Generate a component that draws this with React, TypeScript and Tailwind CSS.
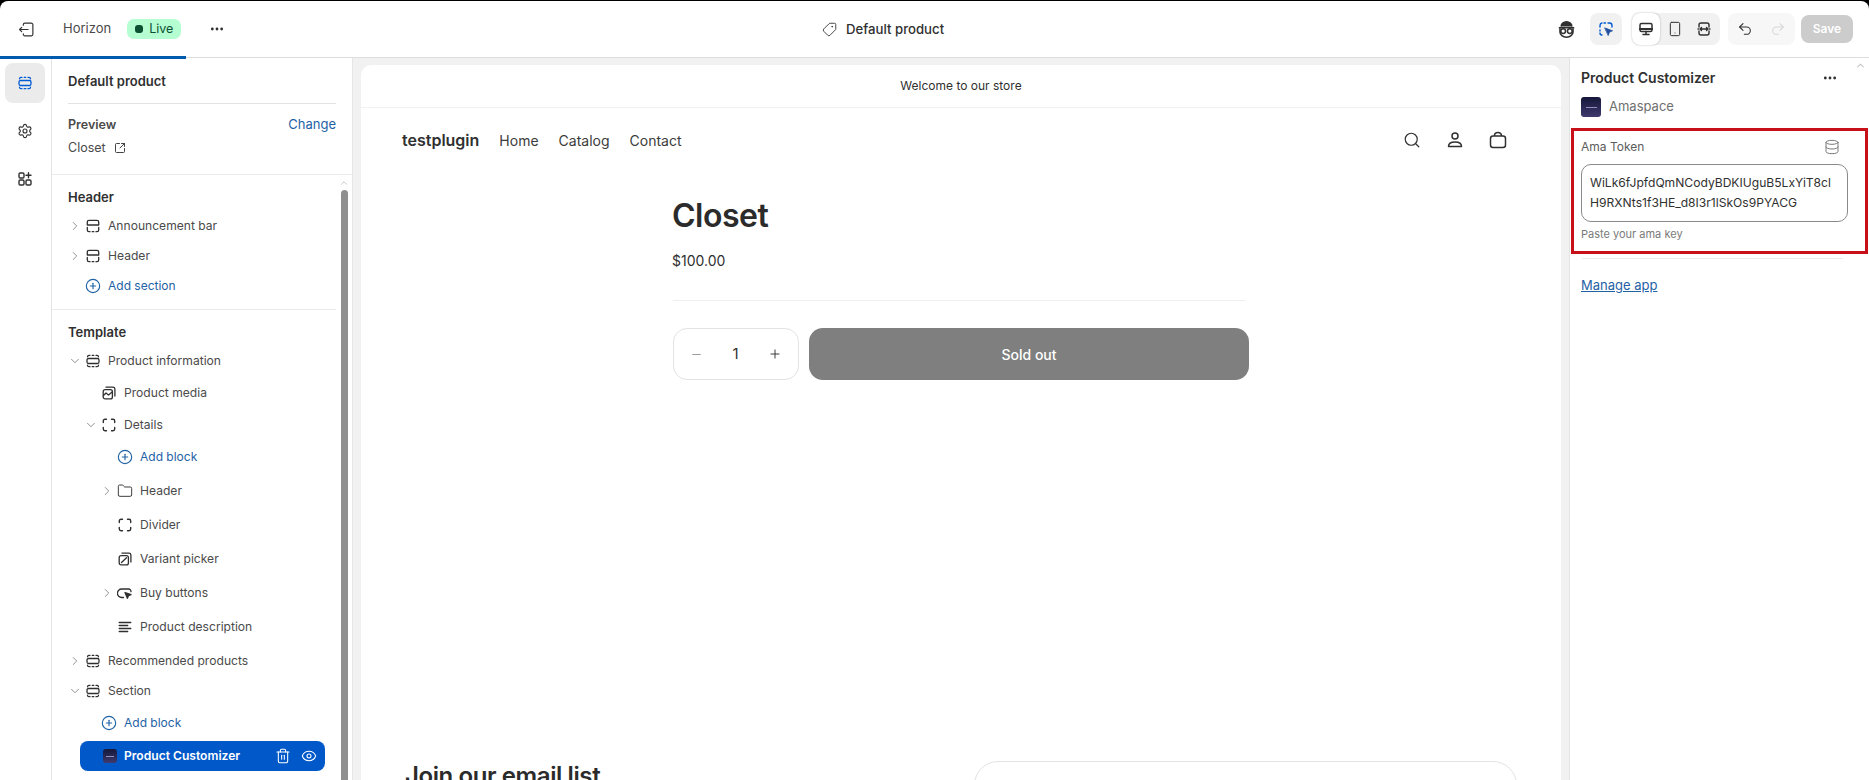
import React from "react";
import {
  ChevronRight, ChevronDown, ChevronUp, CirclePlus, Settings, SquareArrowOutUpRight, Ellipsis, Tag,
  Undo2, Redo2, Search, Trash2, Eye, Database, Smartphone, Minus, Plus, Folder,
} from "lucide-react";

const S = (p: React.SVGProps<SVGSVGElement>) => (
  <svg viewBox="0 0 16 16" width={16} height={16} fill="none" stroke="currentColor" strokeWidth={1.3} strokeLinecap="round" strokeLinejoin="round" {...p} />
);
const SectionIcon = ({ className = "" }: { className?: string }) => (
  <S className={className}>
    <rect x="2" y="5.500" width="12" height="5" rx="1.500" />
    <path d="M2.500 3.800A1.600 1.600 0 0 1 4 2.300h1M7.200 2.300h1.600M11 2.300h1a1.600 1.600 0 0 1 1.500 1.500" />
    <path d="M2.500 12.200A1.600 1.600 0 0 0 4 13.700h1M7.200 13.700h1.600M11 13.700h1a1.600 1.600 0 0 0 1.500-1.500" />
  </S>
);
const TopSection = () => (
  <S className="text-[#303030]">
    <path d="M2.300 7V4a1.700 1.700 0 0 1 1.700-1.700h8A1.700 1.700 0 0 1 13.700 4v3H2.300z" />
    <path d="M2.300 9.300v2.700A1.700 1.700 0 0 0 4 13.700h1M7.200 13.700h1.600M11 13.700h1a1.700 1.700 0 0 0 1.700-1.700V9.300" />
  </S>
);
const BlockDashed = () => (
  <S className="text-[#303030]" strokeWidth={1.4}>
    <path d="M5.500 2.300H4A1.700 1.700 0 0 0 2.300 4v1.500M10.500 2.300H12A1.700 1.700 0 0 1 13.700 4v1.500M5.500 13.700H4A1.700 1.700 0 0 1 2.300 12v-1.500M10.500 13.700H12a1.700 1.700 0 0 0 1.700-1.700v-1.500" />
  </S>
);
const MediaIcon = () => (
  <S className="text-[#303030]">
    <rect x="2.200" y="4.700" width="9.200" height="9.200" rx="2" />
    <path d="M5 2.200h7A1.900 1.900 0 0 1 13.900 4v7" />
    <path d="M2.400 10.500 5 8l2.500 2 3.700-3" />
  </S>
);
const VariantIcon = () => (
  <S className="text-[#303030]">
    <rect x="2.200" y="4.700" width="9.200" height="9.200" rx="2" />
    <path d="M5 2.200h7A1.900 1.900 0 0 1 13.900 4v7" />
    <path d="M4.500 11.500 9.500 6.800" />
  </S>
);
const BuyIcon = () => (
  <S className="text-[#303030]">
    <path d="M6.500 12.500H4.700a2.500 2.500 0 0 1 0-8.500h7a2.400 2.400 0 0 1 2.300 2.600" />
    <path d="m8 7.500 6 2.200-2.600 1-1 2.600z" fill="currentColor" />
  </S>
);
const DescIcon = () => (
  <S className="text-[#303030]">
    <path d="M2.200 3.500h11.600M2.200 6.500h8.500M2.200 9.500h11.600M2.200 12.500h8.500" />
  </S>
);
const AddRow = ({ label, pad, h }: { label: string; pad: string; h: string }) => (
  <div className={`flex items-center gap-[7px] ${pad} ${h} text-[12px]`}>
    <CirclePlus size={16} strokeWidth={1.7} className="text-[#1f62a5]" />
    <span className="text-[#1f62a5]">{label}</span>
  </div>
);
const Row = ({ h, pad, chev, icon, label }: { h: string; pad: string; chev?: "r" | "d"; icon: React.ReactNode; label: string }) => (
  <div className={`flex items-center ${h} ${pad} text-[12.1px] text-[#4a4a4a]`}>
    <span className="w-[16px] shrink-0 flex justify-start text-[#8a8a8a]">
      {chev === "r" && <ChevronRight size={14} strokeWidth={1.6} />}
      {chev === "d" && <ChevronDown size={14} strokeWidth={1.6} />}
    </span>
    <span className="w-[16px] shrink-0 ml-[1px] flex">{icon}</span>
    <span className="ml-[7px] whitespace-nowrap">{label}</span>
  </div>
);
const Logo = ({ size }: { size: string }) => (
  <span className={`${size} rounded-[3px] bg-gradient-to-b from-[#15173a] to-[#3f3a6e] flex items-center justify-center shrink-0`}>
    <span className="w-[55%] h-px bg-[#8f8fb8]" />
  </span>
);

const TopBar = () => (
  <div className="h-[56px] shrink-0 bg-white rounded-t-[8px] flex items-center relative">
    <div className="w-[52px] flex justify-center text-[#303030]">
      <svg viewBox="0 0 16 16" width={17} height={17} fill="none" stroke="currentColor" strokeWidth={1.100} strokeLinecap="round" strokeLinejoin="round">
        <path d="M5 4V3.500A1.500 1.500 0 0 1 6.500 2h6A1.500 1.500 0 0 1 14 3.500v9a1.500 1.500 0 0 1-1.500 1.500h-6A1.500 1.500 0 0 1 5 12.500V12" />
        <path d="M9.500 8H1.500M3.500 6 1.500 8l2 2" />
      </svg>
    </div>
    <span className="ml-[11px] text-[13px] text-[#4a4a4a]">Horizon</span>
    <span className="ml-[16px] h-[20px] w-[54px] rounded-[7px] bg-[#b4fed2] flex items-center pl-[8px] gap-[6px] text-[12.5px] text-[#0c5132]">
      <span className="w-[8px] h-[8px] rounded-[3px] bg-[#0c5132]" />
      Live
    </span>
    <Ellipsis size={16} strokeWidth={2.2} className="ml-[28px] text-[#303030]" />
    <div className="absolute left-[822px] top-[19px] flex items-center gap-[9px] text-[13.2px] font-medium text-[#303030]">
      <Tag size={15} strokeWidth={1.4} className="-scale-x-100" />
      Default product
    </div>
    <div className="ml-auto flex items-center pr-[16px]">
      <svg viewBox="0 0 16 16" width={19} height={19} fill="none" stroke="#303030" strokeWidth={1.300}>
        <path d="M3.500 5.500A4.500 4 0 0 1 12.500 5.500" fill="#303030" />
        <path d="M1.500 6.500h13" />
        <circle cx="5.200" cy="9.300" r="2" />
        <circle cx="10.800" cy="9.300" r="2" />
        <path d="M2.500 7v3a5.500 4.500 0 0 0 11 0V7" />
      </svg>
      <div className="ml-[14px] w-[32px] h-[32px] rounded-[8px] bg-[#f1f1f1] flex items-center justify-center">
        <svg viewBox="0 0 16 16" width={16} height={16} fill="none" stroke="#005bd3" strokeWidth={1.400} strokeLinecap="round">
          <path d="M6 2h1.500M2 6V4.500A2.500 2.500 0 0 1 4 2M2 9v1M10 2h1.500A2.500 2.500 0 0 1 14 4.500V6M4 14a2 2 0 0 1-2-2" />
          <path d="m7 7 7.500 2.800-3 1.200-1.200 3.200z" fill="#1f4f9e" stroke="#1f4f9e" strokeWidth={0.8} strokeLinejoin="round" />
        </svg>
      </div>
      <div className="ml-[10px] h-[32px] w-[88px] rounded-[8px] bg-[#f1f1f1] flex items-center text-[#303030]">
        <span className="w-[28px] h-[32px] rounded-[8px] bg-white flex items-center justify-center shadow-[0_0_2px_rgba(0,0,0,0.3)]">
          <svg viewBox="0 0 16 16" width={16} height={16} fill="none" stroke="currentColor" strokeWidth={1.500} strokeLinecap="round" strokeLinejoin="round">
            <rect x="2" y="2.500" width="12" height="8" rx="1.500" />
            <path d="M2 8h12" strokeWidth={2.200} />
            <path d="M8 10.500v3M5 13.500h6" />
          </svg>
        </span>
        <span className="w-[30px] flex justify-center"><Smartphone size={16} strokeWidth={1.5} /></span>
        <span className="w-[28px] flex justify-center">
          <svg viewBox="0 0 16 16" width={16} height={16} fill="none" stroke="currentColor" strokeWidth={1.400} strokeLinecap="round" strokeLinejoin="round">
            <path d="M3 6V4a2 2 0 0 1 2-2h6a2 2 0 0 1 2 2v2M3 10v2a2 2 0 0 0 2 2h6a2 2 0 0 0 2-2v-2" />
            <path d="M4 8h8M2 8h.5M13.500 8h.5M5.500 6.500 4 8l1.500 1.500M10.500 6.500 12 8l-1.500 1.500" />
          </svg>
        </span>
      </div>
      <div className="ml-[8px] h-[32px] w-[67px] rounded-[8px] bg-[#f7f7f7] flex items-center">
        <span className="w-[33px] flex justify-center"><Undo2 size={16} strokeWidth={1.6} className="text-[#303030]" /></span>
        <span className="w-[33px] flex justify-center"><Redo2 size={16} strokeWidth={1.6} className="text-[#d8d8d8]" /></span>
      </div>
      <div className="ml-[6px] w-[52px] h-[28px] rounded-[8px] bg-[#cccccc] text-white text-[12px] font-semibold flex items-center justify-center">Save</div>
    </div>
    <div className="absolute left-0 right-0 bottom-[-1px] h-[1px] bg-[#dddddd]" />
    <div className="absolute left-0 bottom-[-2px] w-[186px] h-[3px] bg-[#005bac]" />
  </div>
);

const Rail = () => (
  <div className="w-[52px] shrink-0 border-r border-[#e3e3e3] bg-white flex flex-col items-start pl-[5px] pt-[5px] text-[#303030]">
    <div className="w-[40px] h-[40px] rounded-[8px] bg-[#ebebeb] flex items-center justify-center text-[#005bd3]">
      <SectionIcon />
    </div>
    <div className="w-[40px] h-[40px] mt-[8px] flex items-center justify-center"><Settings size={16} strokeWidth={1.7} /></div>
    <div className="w-[40px] h-[40px] mt-[8px] flex items-center justify-center">
      <S strokeWidth={1.400}>
        <rect x="2" y="2" width="5" height="5" rx="1.200" />
        <rect x="2" y="9" width="5" height="5" rx="1.200" />
        <rect x="9" y="9" width="5" height="5" rx="1.200" />
        <path d="M11.500 1.800v5M9 4.300h5" />
      </S>
    </div>
  </div>
);

const Sidebar = () => (
  <div className="w-[301px] shrink-0 bg-white flex flex-col border-r border-[#e6e6e6] h-full">
    <div className="pl-[16px] pr-[16px]">
      <div className="h-[46px] flex items-center text-[13px] font-semibold text-[#303030] border-b border-[#e3e3e3] pt-[3px]">Default product</div>
    </div>
    <div className="h-[71px] pl-[16px] pr-[16px] border-b border-[#ebebeb] shrink-0">
      <div className="flex justify-between items-center mt-[11px] h-[20px] text-[13px]">
        <span className="font-semibold text-[#4a4a4a] text-[12.5px]">Preview</span>
        <span className="text-[#1f62a5]">Change</span>
      </div>
      <div className="flex items-center gap-[8px] mt-[4px] text-[12.5px] text-[#4a4a4a]">
        Closet <SquareArrowOutUpRight size={12} strokeWidth={1.8} className="text-[#303030]" />
      </div>
    </div>
    <div className="flex flex-1 min-h-0 overflow-hidden">
      <div className="w-[284px] shrink-0 pl-[16px]">
        <div className="mt-[9px] h-[28px] flex items-center text-[13px] font-semibold text-[#303030]">Header</div>
        <Row h="h-[28px]" pad="" chev="r" icon={<TopSection />} label="Announcement bar" />
        <Row h="h-[32px]" pad="" chev="r" icon={<TopSection />} label="Header" />
        <AddRow label="Add section" pad="pl-[17px]" h="h-[28px]" />
        <div className="border-b border-[#ebebeb] -ml-[16px] mt-[9px]" />
        <div className="mt-[7px] h-[32px] flex items-center text-[13px] font-semibold text-[#303030]">Template</div>
        <Row h="h-[24px]" pad="" chev="d" icon={<SectionIcon className="text-[#303030]" />} label="Product information" />
        <Row h="h-[40px]" pad="pl-[16px]" icon={<MediaIcon />} label="Product media" />
        <Row h="h-[24px]" pad="pl-[16px]" chev="d" icon={<BlockDashed />} label="Details" />
        <AddRow label="Add block" pad="pl-[49px]" h="h-[40px]" />
        <Row h="h-[28px]" pad="pl-[32px]" chev="r" icon={<Folder size={16} strokeWidth={1.4} className="text-[#303030]" />} label="Header" />
        <Row h="h-[40px]" pad="pl-[32px]" icon={<BlockDashed />} label="Divider" />
        <Row h="h-[28px]" pad="pl-[32px]" icon={<VariantIcon />} label="Variant picker" />
        <Row h="h-[40px]" pad="pl-[32px]" chev="r" icon={<BuyIcon />} label="Buy buttons" />
        <Row h="h-[28px]" pad="pl-[32px]" icon={<DescIcon />} label="Product description" />
        <Row h="h-[40px]" pad="" chev="r" icon={<SectionIcon className="text-[#303030]" />} label="Recommended products" />
        <Row h="h-[20px]" pad="" chev="d" icon={<SectionIcon className="text-[#303030]" />} label="Section" />
        <AddRow label="Add block" pad="pl-[33px] mt-[4px]" h="h-[36px]" />
        <div className="ml-[12px] w-[245px] h-[30px] rounded-[8px] bg-[#0058c9] flex items-center pl-[23px] pr-[8px] text-white text-[12.1px] font-semibold">
          <Logo size="w-[14px] h-[14px]" />
          <span className="ml-[7px]">Product Customizer</span>
          <Trash2 size={16} strokeWidth={1.6} className="ml-auto" />
          <Eye size={16} strokeWidth={1.6} className="ml-[10px]" />
        </div>
      </div>
      <div className="w-[15px] flex flex-col items-center text-[#c4c4c4] pl-[1px]">
        <ChevronUp size={10} strokeWidth={2.2} className="mt-[3px]" />
        <div className="w-[7px] flex-1 rounded-t-[4px] bg-[#8f8f8f] mt-[2px]" />
      </div>
    </div>
  </div>
);

const Preview = () => (
  <div className="flex-1 min-w-0 bg-[#f1f1f1] pt-[7px] pl-[8px] overflow-hidden">
    <div className="w-[1200px] h-[760px] bg-white rounded-t-[10px] overflow-hidden text-[#303030]">
      <div className="h-[43px] flex items-center justify-center text-[12px] border-b border-[#f1f1f1]">Welcome to our store</div>
      <div className="h-[64px] flex items-center pl-[41px] pr-[54px]">
        <span className="text-[16px] font-semibold mr-[20px]">testplugin</span>
        <span className="text-[14px] text-[#3c3c3c] mr-[20px]">Home</span>
        <span className="text-[14px] text-[#3c3c3c] mr-[20px]">Catalog</span>
        <span className="text-[14px] text-[#3c3c3c]">Contact</span>
        <div className="ml-auto flex items-center gap-[25px]">
          <Search size={18} strokeWidth={1.6} />
          <svg viewBox="0 0 18 18" width={18} height={18} fill="none" stroke="currentColor" strokeWidth={1.500}>
            <circle cx="9" cy="5" r="3" />
            <path d="M2.500 15.500c0-3 3-4.500 6.500-4.500s6.500 1.500 6.500 4.500z" strokeLinejoin="round" />
          </svg>
          <svg viewBox="0 0 18 18" width={18} height={18} fill="none" stroke="currentColor" strokeWidth={1.500} strokeLinejoin="round">
            <rect x="1.500" y="5" width="15" height="11.500" rx="2.500" />
            <path d="M5.500 5V4.500a3.500 3 0 0 1 7 0V5" />
          </svg>
        </div>
      </div>
      <div className="w-[576px] mx-auto">
        <h1 className="mt-[24px] -ml-[1px] h-[40px] flex items-center text-[32px] font-semibold tracking-[-0.5px] text-[#2b2b2b]">Closet</h1>
        <div className="mt-[15px] -ml-[1px] text-[14px] leading-[20px]">$100.00</div>
        <div className="mt-[29px] w-[573px] border-b border-[#efefef]" />
        <div className="mt-[27px] flex gap-[10px]">
          <div className="w-[126px] h-[52px] rounded-[14px] border border-[#e3e3e3] flex items-center justify-between px-[16px]">
            <Minus size={13} strokeWidth={1.6} className="text-[#8a8a8a]" />
            <span className="text-[15px]">1</span>
            <Plus size={14} strokeWidth={1.6} />
          </div>
          <div className="w-[440px] h-[52px] rounded-[14px] bg-[#7f7f7f] text-white text-[14px] font-medium flex items-center justify-center">Sold out</div>
        </div>
      </div>
      <div className="mt-[381px] flex items-start pl-[44px]">
        <div className="text-[24px] leading-[30px] font-semibold whitespace-nowrap w-[569px] tracking-[-0.4px] text-[#2b2b2b]">Join our email list</div>
        <div className="w-[543px] h-[60px] rounded-t-[24px] border border-[#e3e3e3]" />
      </div>
    </div>
  </div>
);

const RightPanel = () => (
  <div className="w-[300px] shrink-0 bg-white border-l border-[#e3e3e3] relative text-[#303030]">
    <ChevronUp size={11} strokeWidth={2.2} className="absolute right-[3px] top-[2px] text-[#c4c4c4]" />
    <div className="pl-[11px] pr-[31px] pt-[10px] h-[29px] flex items-center justify-between">
      <span className="text-[14px] font-semibold">Product Customizer</span>
      <Ellipsis size={16} strokeWidth={2.2} />
    </div>
    <div className="pl-[11px] mt-[10px] h-[20px] flex items-center gap-[8px] text-[13px] text-[#6f6f6f]">
      <Logo size="w-[20px] h-[20px]" />
      Amaspace
    </div>
    <div className="ml-[1px] mr-[1px] mt-[11px] h-[126px] border-[3px] border-[#c8101a] pl-[7px] pr-[16px]">
      <div className="h-[32px] flex items-center justify-between text-[12px] text-[#5c5c5c]">
        Ama Token
        <Database size={16} strokeWidth={1.5} className="text-[#7a7a7a] mr-[9px]" />
      </div>
      <div className="mt-[1px] w-[267px] h-[58px] rounded-[10px] border border-[#8a8a8a] pl-[8px] pt-[8px] text-[12.1px] leading-[20px] whitespace-nowrap text-[#303030]">
        <div>WiLk6fJpfdQmNCodyBDKIUguB5LxYiT8cl</div>
        <div>H9RXNts1f3HE_d8I3r1lSkOs9PYACG</div>
      </div>
      <div className="mt-[4px] text-[11px] leading-[16px] text-[#7a7a7a]">Paste your ama key</div>
    </div>
    <div className="ml-[12px] w-[261px] mt-[4px] border-b border-[#ebebeb]" />
    <div className="ml-[11px] mt-[17px] text-[13px] text-[#1f62a5] underline">Manage app</div>
  </div>
);

export default function App() {
  return (
    <div className="h-[780px] w-[1869px] overflow-hidden bg-black pt-px flex flex-col font-['Inter','Liberation_Sans',sans-serif]">
      <TopBar />
      <div className="flex flex-1 min-h-0 bg-white pt-[1px] overflow-hidden">
        <Rail />
        <Sidebar />
        <Preview />
        <RightPanel />
      </div>
    </div>
  );
}
